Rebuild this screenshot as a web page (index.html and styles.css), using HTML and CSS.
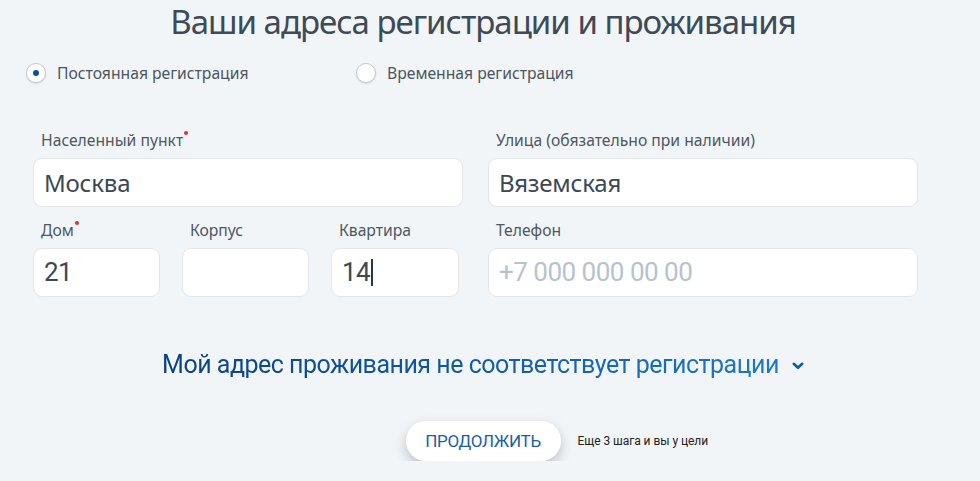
FILE: index.html
```html
<!DOCTYPE html>
<html lang="ru">
<head>
<meta charset="utf-8">
<title>Адреса регистрации</title>
<link rel="stylesheet" href="styles.css">
</head>
<body>
<main class="page">
  <h1 class="title">Ваши адреса регистрации и проживания</h1>

  <div class="radios">
    <label class="radio">
      <span class="radio-circle is-checked"></span>
      <span class="radio-text">Постоянная регистрация</span>
    </label>
    <label class="radio">
      <span class="radio-circle"></span>
      <span class="radio-text">Временная регистрация</span>
    </label>
  </div>

  <div class="form">
    <div class="field">
      <div class="label is-required">Населенный пункт</div>
      <div class="input">Москва</div>
    </div>
    <div class="field">
      <div class="label">Улица (обязательно при наличии)</div>
      <div class="input">Вяземская</div>
    </div>
    <div class="triple">
      <div class="field">
        <div class="label is-required">Дом</div>
        <div class="input input-num">21</div>
      </div>
      <div class="field">
        <div class="label">Корпус</div>
        <div class="input input-num"></div>
      </div>
      <div class="field">
        <div class="label">Квартира</div>
        <div class="input input-num">14<span class="caret"></span></div>
      </div>
    </div>
    <div class="field">
      <div class="label">Телефон</div>
      <div class="input input-num is-placeholder">+7 000 000 00 00</div>
    </div>
  </div>

  <div class="toggle">
    <span class="toggle-text">Мой адрес проживания не соответствует регистрации</span>
    <svg class="chevron" width="12" height="8" viewBox="0 0 12 8" aria-hidden="true">
      <path d="M1.8 1.8 L6 5.8 L10.2 1.8" fill="none" stroke="#0d5aa7" stroke-width="2.6" stroke-linecap="round" stroke-linejoin="round"/>
    </svg>
  </div>

  <div class="actions">
    <span></span>
    <button class="btn" type="button">ПРОДОЛЖИТЬ</button>
    <span class="note">Еще 3 шага и вы у цели</span>
  </div>
</main>
</body>
</html>
```

FILE: styles.css
```css
* { box-sizing: border-box; }

html, body {
  margin: 0;
  padding: 0;
  background: #f2f5f7;
}

body {
  font-family: "Noto Sans", "Open Sans", sans-serif;
  color: #3e4a56;
}

.page {
  width: 966px;
}

.title {
  margin: 0;
  text-align: center;
  font-size: 33px;
  line-height: 44px;
  letter-spacing: -1px;
  font-weight: 400;
  color: #3e4a56;
}

.radios {
  display: flex;
  margin-top: 19px;
  padding-left: 26px;
  height: 20px;
}

.radio {
  display: flex;
  align-items: center;
  gap: 11px;
  width: 330px;
}

.radio-circle {
  width: 20px;
  height: 20px;
  border-radius: 50%;
  background: #fff;
  border: 1px solid #c3cad0;
  box-shadow: 0 1px 2px rgba(0, 0, 0, 0.12);
  display: flex;
  align-items: center;
  justify-content: center;
}

.radio-circle.is-checked::after {
  content: "";
  width: 6px;
  height: 6px;
  border-radius: 50%;
  background: #0d4e9a;
}

.radio-text {
  font-size: 15.7px;
  line-height: 20px;
  color: #4b5661;
}

.form {
  margin-top: 47px;
  padding-left: 33px;
  display: grid;
  grid-template-columns: 430px 430px;
  column-gap: 25px;
  row-gap: 13px;
}

.triple {
  display: grid;
  grid-template-columns: 127px 127px 128px;
  column-gap: 22px;
}

.label {
  font-size: 15.7px;
  line-height: 20px;
  color: #4d5863;
  padding-left: 8px;
  margin-bottom: 8px;
  white-space: nowrap;
}

.label.is-required::after {
  content: "";
  display: inline-block;
  width: 4px;
  height: 4px;
  border-radius: 50%;
  background: #e5302a;
  vertical-align: 11px;
  margin-left: 1px;
}

.input {
  height: 49px;
  background: #fff;
  border: 1px solid #e3e7ea;
  border-radius: 9px;
  padding-left: 10px;
  font-size: 24px;
  line-height: 47px;
  letter-spacing: -0.2px;
  color: #3c4853;
  white-space: nowrap;
}

.input-num {
  font-family: Roboto, "Liberation Sans", sans-serif;
  font-size: 26px;
  letter-spacing: -0.6px;
}

.is-placeholder {
  color: #b6c2cf;
  letter-spacing: -0.5px;
}

.caret {
  display: inline-block;
  width: 1.5px;
  height: 27px;
  background: #2c3540;
  vertical-align: -5px;
  margin-left: 1px;
}

.toggle {
  margin-top: 53px;
  display: flex;
  justify-content: center;
  align-items: center;
  gap: 13px;
  height: 30px;
}

.toggle-text {
  font-family: Roboto, "Liberation Sans", sans-serif;
  font-size: 25px;
  line-height: 30px;
  letter-spacing: -0.5px;
  background: linear-gradient(90deg, #0b3f87 0%, #0e5aa8 50%, #1c78c8 100%);
  -webkit-background-clip: text;
  background-clip: text;
  color: transparent;
}

.chevron {
  display: block;
  margin-top: 2px;
}

.actions {
  margin-top: 41px;
  display: grid;
  grid-template-columns: 1fr auto 1fr;
  align-items: center;
}

.btn {
  width: 155px;
  height: 40px;
  border: none;
  border-radius: 20px;
  background: #fff;
  box-shadow: 0 5px 12px rgba(40, 50, 60, 0.26);
  font-family: Roboto, "Liberation Sans", sans-serif;
  font-size: 17px;
  color: #1a5fa8;
  letter-spacing: -0.3px;
  padding: 0;
}

.note {
  margin-left: 17px;
  font-family: Roboto, "Liberation Sans", sans-serif;
  font-size: 12px;
  letter-spacing: -0.05px;
  color: #222;
}
```
